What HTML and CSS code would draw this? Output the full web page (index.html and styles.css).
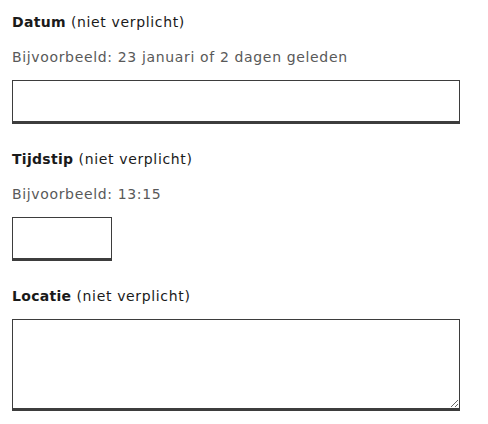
FILE: index.html
```html
<!DOCTYPE html>
<html lang="nl">
<head>
<meta charset="utf-8">
<title>Formulier</title>
<link rel="stylesheet" href="styles.css">
</head>
<body>
<form class="form">
  <div class="field">
    <label class="label" for="datum"><strong>Datum</strong> (niet verplicht)</label>
    <div class="hint">Bijvoorbeeld: 23 januari of 2 dagen geleden</div>
    <input class="input" id="datum" type="text">
  </div>
  <div class="field">
    <label class="label" for="tijdstip"><strong>Tijdstip</strong> (niet verplicht)</label>
    <div class="hint">Bijvoorbeeld: 13:15</div>
    <input class="input input-short" id="tijdstip" type="text">
  </div>
  <div class="field">
    <label class="label label-nohint" for="locatie"><strong>Locatie</strong> (niet verplicht)</label>
    <textarea class="input textarea" id="locatie"></textarea>
  </div>
</form>
</body>
</html>
```
FILE: styles.css
```css
html, body {
  margin: 0;
  padding: 0;
  background: #ffffff;
}
body {
  font-family: "DejaVu Sans", "Open Sans", sans-serif;
  font-size: 14px;
  line-height: 20px;
  letter-spacing: 0.65px;
  color: #1a1a1a;
}
.form {
  padding: 12px 12px 8px;
  width: 448px;
}
.field {
  display: flex;
  flex-direction: column;
  align-items: flex-start;
  margin-bottom: 25px;
}
.field:last-child {
  margin-bottom: 0;
}
.label {
  display: block;
  margin-bottom: 15px;
}
.label strong {
  font-weight: 700;
  letter-spacing: 0.3px;
}
.label-nohint {
  margin-bottom: 13px;
}
.hint {
  color: #595959;
  margin-bottom: 13px;
}
.input {
  box-sizing: border-box;
  width: 448px;
  height: 44px;
  margin: 0;
  padding: 4px 8px;
  border: 1px solid #3d3d3d;
  border-bottom-width: 3px;
  border-radius: 0;
  background: #ffffff;
  font: inherit;
  outline: none;
}
.input-short {
  width: 100px;
}
.textarea {
  height: 92px;
  display: block;
  resize: both;
}
```
